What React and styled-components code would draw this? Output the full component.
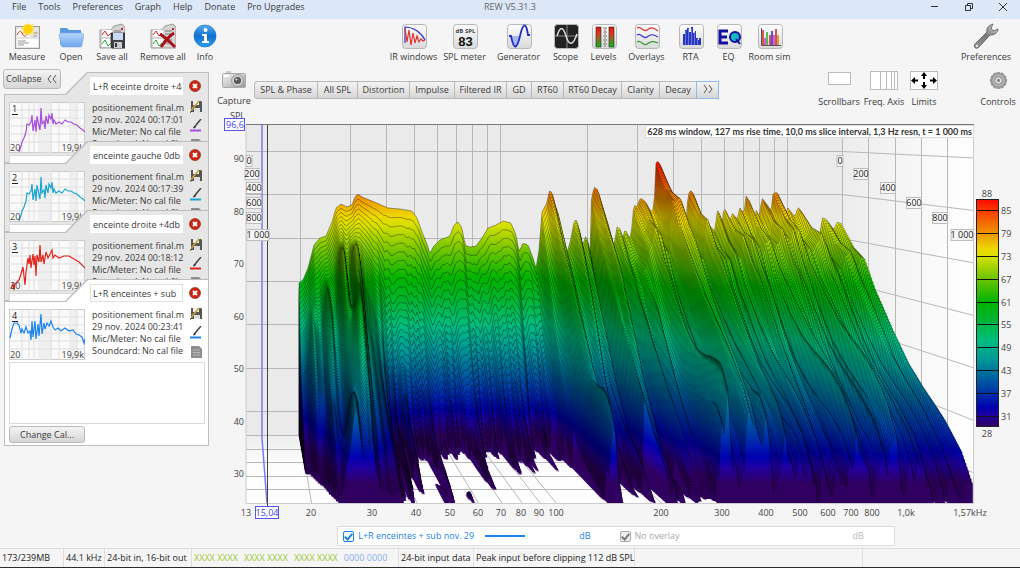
import React from 'react';
import styled, { createGlobalStyle, css } from 'styled-components';

const GlobalStyle = createGlobalStyle`
  * {
    box-sizing: border-box;
  }
  body {
    margin: 0;
    background: #f5f5f5;
    color: #3a3a3a;
    font: 9px/12px "Open Sans", "Noto Sans", sans-serif;
  }
  button, input, textarea {
    font: inherit;
    color: inherit;
    margin: 0;
  }
`;

const Window = styled.div`
  display: flex;
  flex-direction: column;
  min-height: 100vh;
  border-bottom: 1px solid #2c2c2c;
`;

const TitleBar = styled.header`
  display: grid;
  grid-template-columns: 1fr auto 1fr;
  align-items: center;
  height: 19px;
  padding-bottom: 5px;
  background: #dce8f7;
`;

const Menu = styled.nav`
  display: flex;
  padding-left: 12px;
  gap: 12px;
`;

const MenuButton = styled.button`
  border: 0;
  padding: 0;
  background: none;
  line-height: 12px;
`;

const AppTitle = styled.h1`
  margin: 0;
  font-size: 9px;
  font-weight: 400;
  color: #666;
`;

const WindowButtons = styled.div`
  display: flex;
  justify-content: flex-end;
  gap: 22px;
  padding-right: 11px;
`;

const WindowButton = styled(MenuButton)`
  width: 12px;
  height: 12px;
  svg {
    display: block;
  }
`;

const Toolbar = styled.div`
  display: flex;
  justify-content: space-between;
  height: 47px;
  padding: 4px 5px 0 4px;
`;

const ToolGroup = styled.div`
  display: flex;
  padding-left: ${p => p.$before || 0}px;
  padding-right: ${p => p.$after || 0}px;
`;

const ToolButton = styled.button`
  display: flex;
  flex-direction: column;
  align-items: center;
  gap: ${p => p.$gap || 2}px;
  width: ${p => p.$width}px;
  padding: 0;
  border: 0;
  background: none;
  line-height: 12px;
  white-space: nowrap;
  svg {
    flex: none;
  }
`;

const Body = styled.div`
  display: flex;
  flex: 1;
`;

const Sidebar = styled.aside`
  flex: none;
  width: 212px;
  padding: 3px 3px 0 3px;
`;

const buttonLook = css`
  border: 1px solid #b9b9b9;
  background: linear-gradient(#f4f4f4, #d6d6d6);
`;

const CollapseButton = styled.button`
  ${buttonLook}
  display: flex;
  align-items: center;
  gap: 6px;
  width: 58px;
  height: 20px;
  padding: 0 2px;
  border-radius: 3px;
`;

const CardList = styled.div`
  margin: -17px 0 0 1px;
`;

const tabShape = 'polygon(0 22px, 61px 22px, 83px 0, 100% 0, 100% 100%, 0 100%)';

// every card but the open one is covered from below by the next card
const Card = styled.section`
  position: relative;
  width: 205px;
  height: ${p => (p.$open ? 'auto' : '91px')};
  margin-bottom: ${p => (p.$open ? 0 : -22)}px;
  padding: 5px 4px 3px 5px;
  overflow: hidden;
  background: #bdbdbd;
  clip-path: ${tabShape};
  &::before {
    content: '';
    position: absolute;
    inset: 1px;
    background: ${p => (p.$open ? '#fff' : '#e6e6e6')};
    clip-path: ${tabShape};
  }
  > * {
    position: relative;
  }
`;

const CardTop = styled.div`
  display: flex;
  align-items: center;
  gap: 6px;
  height: 18px;
  margin-left: 81px;
`;

const NameInput = styled.input`
  width: 93px;
  height: 18px;
  padding: 0 0 0 2px;
  border: 1px solid ${p => (p.$open ? '#e0e0e0' : '#fff')};
  background: #fff;
`;

const IconButton = styled.button`
  display: block;
  padding: 0;
  border: 0;
  background: none;
  svg {
    display: block;
  }
`;

const CardMain = styled.div`
  display: grid;
  grid-template-columns: 76px 1fr 13px;
  column-gap: 7px;
  margin-top: 7px;
`;

const Info = styled.div`
  overflow: hidden;
  white-space: nowrap;
  height: 51px;
`;

const CardIcons = styled.div`
  display: flex;
  flex-direction: column;
  gap: 6px;
  margin: -2px 0 0 -2px;
`;

const Notes = styled.textarea`
  display: block;
  width: 196px;
  height: 62px;
  margin-top: 2px;
  border: 1px solid #dadada;
  background: #fff;
  resize: none;
`;

const CalButton = styled.button`
  ${buttonLook}
  width: 76px;
  height: 17px;
  margin-top: 2px;
  padding: 0;
  border-radius: 3px;
`;

const Main = styled.main`
  flex: 1;
  min-width: 0;
`;

const GraphBar = styled.div`
  display: flex;
  height: 42px;
  padding: 5px 0 0 6px;
`;

const Tabs = styled.div`
  display: flex;
  height: 18px;
  margin: 10px auto 0 5px;
`;

const Tab = styled.button`
  ${buttonLook}
  width: ${p => p.$width}px;
  padding: 0;
  margin-left: -1px;
  white-space: nowrap;
  &:first-child {
    border-radius: 3px 0 0 3px;
  }
  ${p => p.$active && css`
    border-color: #8fb8ee;
  `}
`;

const Graph = styled.svg`
  display: block;
  width: 100%;
  height: auto;
`;

const Legend = styled.div`
  display: flex;
  align-items: center;
  width: 69%;
  height: 20px;
  margin: 4px auto 2px;
  padding: 0 30px 0 5px;
  border: 1px solid #dcdcdc;
  background: #fff;
`;

const Trace = styled.label`
  display: flex;
  align-items: center;
  gap: 4px;
  width: ${p => p.$width}px;
  color: ${p => p.$color};
`;

const Check = styled.input`
  appearance: none;
  width: 11px;
  height: 11px;
  border: 1px solid currentColor;
  border-radius: 2px;
  color: inherit;
  background: ${p => (p.disabled ? '#eee' : '#fff')};
  &::after {
    content: '';
    display: block;
    width: 3px;
    height: 6px;
    margin: 0 auto;
    border: solid ${p => (p.disabled ? '#777' : 'currentColor')};
    border-width: 0 2px 2px 0;
    transform: rotate(40deg);
  }
`;

const TraceLine = styled.div`
  width: 40px;
  height: 2px;
  background: #1c83e8;
`;

const Unit = styled.span`
  margin-left: ${p => p.$left};
  margin-right: ${p => p.$right || 0};
  color: ${p => p.$color};
`;

const StatusBar = styled.footer`
  display: flex;
  height: 19px;
  border-top: 1px solid #dedede;
  color: #222;
`;

const StatusCell = styled.div`
  width: ${p => p.$width}px;
  padding: 3px 0 0 2px;
  border-right: 1px solid #dedede;
  white-space: nowrap;
`;

const Bits = styled.span`
  margin-right: 6px;
  color: ${p => (p.$zero ? '#8aaef0' : '#9cc83a')};
`;

/* ---------- icons ---------- */

const Svg = ({ size = 26, children }) => (
  <svg width={size} height={size} viewBox={`0 0 ${size} ${size}`} fill="none">{children}</svg>
);

const Tile = ({ dark, children }) => (
  <Svg>
    <rect x="1.5" y="1.5" width="24" height="24" rx="3" fill={dark ? '#222' : 'url(#tile)'} stroke="#b8b8b8" />
    {children}
  </Svg>
);

const SheetArt = () => (
  <g>
    <path d="M1 7H12L15 3L23 1L26 4V25H1Z" fill="#d4d4d4" stroke="#999" />
    <rect x="3" y="7" width="10" height="7" fill="#fff" />
    <rect x="3" y="16" width="10" height="8" fill="#fff" />
    <path d="M3 12L6 8L9 13L12 10" stroke="#d22" />
    <path d="M3 21L6 17L9 23L12 20" stroke="#2a3" />
    <path d="M15 8H22M15 11H21M15 17H22M15 20H21" stroke="#777" />
    <path d="M22 5L24 7M24 5L22 7" stroke="#c22" />
  </g>
);

const MeasureIcon = () => (
  <Svg>
    <rect x="1.5" y="3.500" width="24" height="22" fill="#e4e4e4" stroke="#999" />
    <rect x="3" y="6" width="13" height="8" fill="#fff" />
    <rect x="3" y="16" width="21" height="8" fill="#fff" />
    <path d="M3 12C5 9 6 6 8 10S11 15 14 9" stroke="#d22" />
    <path d="M4 18H12M4 20H15M4 22H10M19 10H24M19 13H23" stroke="#999" />
    <path d="M14 0L16 2L19 1L19 4L21 6L19 8L20 11L17 11L14 13L12 11L9 11L9 8L7 6L9 4L10 1L12 2Z" fill="#ffe45a" />
    <circle cx="14" cy="6" r="4.500" fill="#ffd000" />
  </Svg>
);

const OpenIcon = () => (
  <Svg>
    <path d="M2 22V6Q2 5 3 5H9L11 7H23V12L2 22Z" fill="#5b98e0" />
    <path d="M1 12Q1 10 3 10H23Q26 10 26 12L24 22Q24 24 22 24H5Q3 24 3 22Z" fill="url(#folder)" stroke="#7cabe8" strokeWidth=".6" />
  </Svg>
);

const SaveAllIcon = () => (
  <Svg>
    <SheetArt />
    <path d="M12 10H26V25H13L12 24Z" fill="#3b3f46" stroke="#222" strokeWidth=".7" />
    <rect x="14" y="10" width="10" height="7" fill="#c9daf2" />
    <rect x="15" y="19" width="8" height="6" fill="#ccc" />
    <rect x="16" y="20" width="2" height="4" fill="#333" />
  </Svg>
);

const RemoveAllIcon = () => (
  <Svg>
    <SheetArt />
    <path d="M10 11C15 14 20 19 25 24M24 10C19 13 15 18 11 24" stroke="#a80f18" strokeWidth="3" />
  </Svg>
);

const InfoIcon = () => (
  <Svg>
    <circle cx="13" cy="13" r="11" fill="url(#info)" stroke="#0b62b8" strokeWidth=".6" />
    <circle cx="13.500" cy="7" r="2" fill="#fff" />
    <path d="M10 11H15V18H17V20H10V18H12V13H10Z" fill="#fff" />
  </Svg>
);

const IrIcon = () => (
  <Tile>
    <path d="M4 20V4C12 4 20 9 24 17" stroke="#3434cc" strokeWidth="1.200" />
    <path d="M4 5L6 19L8 7L10 22L12 10L14 20L16 13L18 19L20 16L22 18L24 17" stroke="#d33" strokeWidth="1.200" />
  </Tile>
);

const SplIcon = () => (
  <Tile>
    <text x="13.500" y="10" fontSize="6" fontWeight="700" textAnchor="middle" fill="#444">dB SPL</text>
    <text x="13.500" y="23" fontSize="13" fontWeight="700" fontFamily="Liberation Sans" textAnchor="middle" fill="#111">83</text>
  </Tile>
);

const GeneratorIcon = () => (
  <Tile>
    <path d="M4 13C7 24 11 28 14 13Z" fill="#a9b8ec" />
    <path d="M3 13H5C8 28 11 26 14 13S20 -2 22 12H24" stroke="#1f2fc4" strokeWidth="1.800" />
  </Tile>
);

const ScopeIcon = () => (
  <Tile dark>
    <path d="M14 2V25M2 13H25" stroke="#888" />
    <path d="M4 13C7 3 10 3 13 13S20 23 24 11" stroke="#ddd" strokeWidth="1.500" />
  </Tile>
);

const LevelsIcon = () => (
  <Tile>
    <rect x="5" y="4" width="5" height="20" fill="url(#level)" stroke="#222" strokeWidth=".6" />
    <rect x="18" y="4" width="5" height="20" fill="url(#level)" stroke="#222" strokeWidth=".6" />
    {[5, 9, 13, 17, 21].map(y => (
      <path key={y} d={`M12 ${y}H16M13 ${y + 2}H15`} stroke="#777" />
    ))}
  </Tile>
);

const OverlaysIcon = () => (
  <Tile>
    {['#d33', '#33c', '#393'].map((c, i) => (
      <path key={c} d={`M3 ${5 + i * 7}C7 ${2 + i * 7} 9 ${10 + i * 7} 13 ${7 + i * 7}S19 ${4 + i * 7} 24 ${8 + i * 6}`} stroke={c} strokeWidth="1.200" />
    ))}
  </Tile>
);

const RtaIcon = () => (
  <Tile>
    <path d="M5 22V11H7V7H9V5H11V9H13V4H15V10H17V8H18V15H20V17H21V15H23V22Z" fill="#2636c0" />
    <path d="M7.500 22V8M10.500 22V6M13.500 22V6M16.500 22V9M19.500 22V16" stroke="#8d97e0" strokeWidth=".7" />
  </Tile>
);

const EqIcon = () => (
  <Tile>
    <path d="M12 8H4V20H12M4 14H11" stroke="#10109c" strokeWidth="3" />
    <circle cx="19" cy="14" r="5" fill="#12b9c0" stroke="#10109c" strokeWidth="2" />
    <path d="M20 16L24 21" stroke="#10109c" strokeWidth="2" />
  </Tile>
);

const RoomIcon = () => (
  <Tile>
    {[['#c22', 6, 7], ['#d3d', 8, 15], ['#2a2', 10, 9], ['#c22', 13, 12], ['#22c', 15, 8], ['#d3d', 17, 12], ['#c22', 19, 6], ['#c80', 21, 12]].map(([c, x, y]) => (
      <path key={x} d={`M${x} ${y}V22`} stroke={c} strokeWidth="1.500" />
    ))}
    <path d="M4.500 5V22.500H24" stroke="#555" />
  </Tile>
);

const WrenchIcon = () => (
  <Svg>
    <path d="M2 21L14 9C13 5 16 2 20 1L18 5L20 8L25 6C25 10 21 12 17 12L6 24C3 27 0 24 2 21Z" fill="url(#wrench)" stroke="#555" strokeWidth=".8" />
    <circle cx="4" cy="23" r="1" fill="#fff" />
  </Svg>
);

const CameraIcon = () => (
  <svg width="24" height="18" viewBox="0 0 24 18">
    <rect x=".5" y="2.500" width="23" height="14" rx="1" fill="url(#steel)" stroke="#aaa" />
    <rect x="4" y="0" width="5" height="2" fill="#ccc" />
    <rect x="2" y="4" width="5" height="2" fill="#fff" />
    <circle cx="15.500" cy="9.500" r="6" fill="#ccc" stroke="#888" strokeWidth=".7" />
    <circle cx="15.500" cy="9.500" r="3.500" fill="#555" />
    <circle cx="14.500" cy="8.500" r="1" fill="#eee" />
  </svg>
);

const ScrollbarsIcon = () => (
  <svg width="26" height="19" viewBox="0 0 26 19"><rect x="2.500" y="1.500" width="22" height="12" fill="#fff" stroke="#bbb" /></svg>
);

const FreqIcon = () => (
  <svg width="28" height="19" viewBox="0 0 28 19">
    <rect x=".5" y=".5" width="27" height="18" fill="#fff" stroke="#bbb" />
    <path d="M10.500 0V19M16.500 0V19M21.500 0V19M24.500 0V19" stroke="#bbb" />
  </svg>
);

const LimitsIcon = () => (
  <svg width="28" height="19" viewBox="0 0 28 19">
    <rect x=".5" y=".5" width="27" height="18" fill="#fff" stroke="#bbb" />
    <path d="M14 1L17 5H15V8H13V5H11ZM14 18L17 14H15V11H13V14H11ZM1 9.500L5 6V8.500H8V10.500H5V13ZM27 9.500L23 6V8.500H20V10.500H23V13Z" fill="#000" />
  </svg>
);

const GearIcon = () => (
  <svg width="19" height="19" viewBox="-10 -10 20 20">
    {[0, 30, 60, 90, 120, 150].map(a => (
      <rect key={a} x="-2" y="-9" width="4" height="18" rx="1" fill="#999" transform={`rotate(${a})`} />
    ))}
    <circle r="7" fill="#b4b4b4" stroke="#888" strokeWidth=".7" />
    <circle r="4" fill="#ddd" stroke="#888" />
    <circle r="1.500" fill="#777" />
  </svg>
);

const CloseIcon = () => (
  <svg width="12" height="12" viewBox="0 0 12 12">
    <circle cx="6" cy="6" r="5.500" fill="#cf2312" stroke="#8e3a2a" strokeWidth=".8" />
    <path d="M4 4L8 8M8 4L4 8" stroke="#fff" strokeWidth="2" />
  </svg>
);

const EditIcon = () => (
  <svg width="13" height="13" viewBox="0 0 13 13">
    <path d="M1 1H11L12 2V12H1Z" fill="#555" />
    <rect x="3" y="1" width="6" height="4" fill="#eee" />
    <rect x="4" y="8" width="6" height="4" fill="#ddd" />
    <path d="M1 11L3 8L9 1" stroke="#c9a63a" strokeWidth="1.500" fill="none" />
    <path d="M0 12.500L2 11" stroke="#222" />
  </svg>
);

const PenIcon = ({ color }) => (
  <svg width="13" height="13" viewBox="0 0 13 13">
    <path d="M4 9L6 6L11 0" stroke="#444" strokeWidth="1.500" fill="none" />
    <path d="M3 9.500L4 7L6 8Z" fill="#333" />
    <path d="M0 11.500H11" stroke={color} strokeWidth="2" />
  </svg>
);

const DocIcon = () => (
  <svg width="13" height="13" viewBox="0 0 13 13">
    <path d="M1 1H9L12 4V13H1Z" fill="#8d8d8d" />
    <path d="M3 5H10M3 7.500H10M3 10H10" stroke="#b8b8b8" />
  </svg>
);

const Defs = () => (
  <svg width="0" height="0" style={{ position: 'absolute' }} aria-hidden="true">
    <defs>
      <linearGradient id="tile" x1="0" y1="0" x2="0" y2="1"><stop stopColor="#fdfdfd" /><stop offset="1" stopColor="#d9d9d9" /></linearGradient>
      <linearGradient id="folder" x1="0" y1="0" x2="0" y2="1"><stop stopColor="#b6d6fb" /><stop offset="1" stopColor="#6ca4ea" /></linearGradient>
      <linearGradient id="info" x1="0" y1="0" x2="0" y2="1"><stop stopColor="#55acf2" /><stop offset=".5" stopColor="#0f70d0" /><stop offset="1" stopColor="#2aa0f4" /></linearGradient>
      <linearGradient id="level" x1="0" y1="0" x2="0" y2="1"><stop stopColor="#e11" /><stop offset=".4" stopColor="#c42" /><stop offset="1" stopColor="#0b2" /></linearGradient>
      <linearGradient id="steel" x1="0" y1="0" x2="1" y2="1"><stop stopColor="#eee" /><stop offset=".5" stopColor="#ccc" /><stop offset="1" stopColor="#999" /></linearGradient>
      <linearGradient id="wrench" x1="1" y1="0" x2="0" y2="1"><stop stopColor="#ddd" /><stop offset=".5" stopColor="#777" /><stop offset="1" stopColor="#999" /></linearGradient>
    </defs>
  </svg>
);

/* ---------- thumbnails ---------- */

const thumbCurves = {
  full: '10,50 12,44 13,40 15,36 17,30 18,22 20,23 22,20 23,13 24,29 26,18 27,30 28,14 30,24 31,28 32,6 33,22 35,19 36,27 37,14 39,22 40,13 42,17 43,11 44,22 45,18 47,22 50,20 53,22 56,18 59,20 62,20 65,22 68,23 71,26 74,28 76,30',
  dip: '2,48 4,44 5,50 6,44 8,42 10,40 12,34 14,27 16,45 17,32 19,18 20,24 21,15 22,28 24,14 25,25 26,16 27,36 28,15 30,22 31,5 32,22 34,15 35,24 37,12 39,18 41,14 43,10 44,18 46,15 50,18 55,16 60,16 65,19 70,22 76,28',
  sub: '1,29 3,20 5,14 8,14 10,16 12,24 13,20 15,24 17,18 19,24 21,22 22,31 23,12 24,28 26,12 27,30 29,15 30,27 32,5 33,25 35,14 36,20 38,14 40,17 42,12 44,18 46,21 49,19 52,22 56,19 60,22 64,21 67,25 70,26 73,28 75,34 76,30',
};

const Thumb = ({ number, curve, color }) => (
  <svg width="76" height="51" viewBox="0 0 76 51">
    <rect x=".5" y=".5" width="75" height="50" fill="#fafafa" stroke="#ccc" />
    <path d="M13 0V51M20 0V51M25 0V51M42 0V51M50 0V51M68 0V51M0 8H76M0 16H76M0 24H76M0 32H76M0 40H76" stroke="#dedede" />
    <rect x="29" y="0" width="14" height="51" fill="#e4e4e4" opacity=".5" />
    <rect x="60" y="0" width="8" height="51" fill="#e4e4e4" opacity=".5" />
    <polyline points={thumbCurves[curve]} fill="none" stroke={color} strokeWidth="1.200" />
    <text x="3" y="10" fontSize="9" fill="#222">{number}</text>
    <path d="M3 12.500H9" stroke="#222" />
    <text x="1" y="49" fontSize="9" fill="#444">20</text>
    <text x="75" y="49" fontSize="9" fill="#444" textAnchor="end">19,9k</text>
  </svg>
);

/* ---------- waterfall ---------- */

const LEFT = 246;
const rearX = s => LEFT + 287 * s;

// level ridge of the first slice, in rear plane coordinates
const ridge = [
  [299, 283], [303, 280], [308, 268], [314, 245], [320, 238], [326, 236], [332, 222], [336, 208], [341, 204], [347, 207],
  [352, 205], [355, 197], [358, 194], [362, 197], [372, 201], [388, 208], [400, 209], [412, 211], [417, 218], [422, 232],
  [427, 244], [430, 254], [433, 247], [440, 240], [450, 236], [454, 225], [458, 222], [462, 228], [465, 245], [470, 247],
  [476, 246], [482, 238], [488, 228], [496, 225], [503, 221], [511, 223], [516, 235], [519, 252], [523, 243], [528, 245],
  [533, 258], [536, 268], [539, 250], [542, 212], [547, 203], [549, 191], [552, 192], [555, 205], [558, 212], [562, 240],
  [565, 258], [570, 243], [574, 222], [576, 219], [580, 232], [583, 247], [585, 236], [588, 240], [590, 254], [591, 202],
  [594, 187], [598, 190], [603, 212], [609, 240], [612, 252], [615, 240], [617, 227], [620, 229], [623, 238], [625, 229],
  [629, 237], [631, 236], [634, 204], [637, 208], [640, 198], [645, 201], [651, 212], [654, 208], [656, 163], [658, 161],
  [661, 166], [667, 184], [674, 206], [680, 224], [683, 218], [686, 222], [688, 195], [691, 190], [694, 195], [699, 214],
  [703, 232], [706, 222], [711, 227], [715, 232], [717, 210], [720, 214], [722, 224], [724, 207], [730, 222], [732, 213],
  [737, 219], [740, 208], [744, 214], [746, 196], [750, 202], [754, 218], [756, 209], [759, 218], [762, 198], [768, 206],
  [771, 212], [773, 194], [777, 192], [782, 204], [784, 216], [788, 208], [795, 217], [798, 207], [803, 214], [808, 228],
  [813, 238], [817, 230], [820, 236], [822, 218], [826, 219], [834, 230], [837, 222], [842, 224],
];

const lerpTable = (table, x) => {
  if (x <= table[0][0]) return table[0][1];
  for (let i = 1; i < table.length; i++) {
    if (x <= table[i][0]) {
      const [x0, y0] = table[i - 1];
      const [x1, y1] = table[i];
      return y0 + ((y1 - y0) * (x - x0)) / (x1 - x0);
    }
  }
  return table[table.length - 1][1];
};

const bass = [[0, 0], [0.1, 11], [0.2, 19], [0.35, 27], [0.5, 33], [0.7, 40], [0.85, 45], [1, 52]];
const dead = [[0, 0], [0.1, 20], [0.2, 36], [0.28, 44], [0.4, 50], [0.6, 53], [1, 56]];
const mid = [[0, 0], [0.1, 7], [0.25, 18], [0.4, 29], [0.6, 40], [0.8, 47], [1, 53]];
const treble = [[0, 0], [0.1, 5], [0.18, 7], [0.26, 13], [0.4, 21], [0.52, 27], [0.63, 31], [0.79, 36], [0.92, 41], [1, 46]];

const decayZones = [
  [299, bass], [362, bass], [385, dead], [530, dead], [550, mid], [605, mid], [640, treble], [842, treble],
];

const drop = (x, u) => {
  for (let i = 1; i < decayZones.length; i++) {
    const [x1, t1] = decayZones[i];
    if (x <= x1) {
      const [x0, t0] = decayZones[i - 1];
      const k = (x - x0) / (x1 - x0);
      return lerpTable(t0, u) * (1 - k) + lerpTable(t1, u) * k;
    }
  }
  return lerpTable(treble, u);
};

// room modes that ring on: position, width, height, and when they are strongest
const modes = [
  [310, 4, 10, 0.35], [324, 4, 10, 0.3], [338, 4, 11, 0.28], [351, 5, 12, 0.28], [346, 7, 17, 0.6], [334, 9, 17, 1],
  [322, 4, 7, 0.75], [350, 4, 8, 1], [432, 4, 12, 0.95], [548, 3, 10, 0.9],
  [604, 4, 6, 1], [636, 2, 9, 1], [641, 2, 10, 1], [672, 2, 9, 1], [688, 2, 8, 1], [700, 2, 7, 1],
];

const ringing = (x, u) => Math.min(1, u * 5) * modes.reduce((sum, [x0, w, h, t]) => (
  sum + h * Math.exp(-(((x - x0) / w) ** 2)) * Math.exp(-(((u - t) / 0.24) ** 2))
), 0);

const ripple = (x, u) => {
  const a = Math.sin(x * 0.41 + Math.sin(x * 0.13) * 2 + u * 2);
  const b = Math.sin(x * 0.93 + Math.cos(x * 0.21) * 2 - u * 3);
  const c = Math.sin(x * 0.19 + u * 5);
  const size = lerpTable([[299, 1], [370, 1], [390, 3.5], [600, 3.5], [640, 2.4], [800, 2.4], [842, 0.5]], x);
  return size * Math.min(1, u * 3) * (a + b * 0.6 + c * 0.7);
};

const FLOOR = 24.3;
const SLICES = 100;

const planeY = (db, u) => 151 + 7 * u + (90 - db) * (4.33 + 0.92 * u);

const slices = Array.from({ length: SLICES + 1 }, (_, i) => {
  const u = i / SLICES;
  const floorY = planeY(FLOOR, u).toFixed(1);
  const pts = [];
  let line = '';
  let down = true;
  for (let x = 299; x <= 842; x += 1.5) {
    const s = (x - LEFT) / 287;
    const db0 = 90 - (lerpTable(ridge, x) - 151) / 4.33;
    const db = Math.max(FLOOR, db0 - drop(x, u) + ringing(x, u) + ripple(x, u));
    const point = `${(LEFT + (287 + 63 * u) * s).toFixed(1)} ${planeY(db, u).toFixed(1)}`;
    // no outline where the level has sunk into the floor
    if (db > FLOOR) line += (down ? 'M' : 'L') + point;
    down = db <= FLOOR;
    pts.push(point);
  }
  const first = pts[0].split(' ')[0];
  const last = pts[pts.length - 1].split(' ')[0];
  return {
    u,
    line: `M${first} ${floorY}L${pts[0]}${line}`,
    area: `M${first} ${floorY}L${pts.join('L')}L${last} ${floorY}Z`,
  };
});

const palette = [
  [88, '#ff0a00'], [82, '#f56a00'], [79, '#ee9400'], [75, '#eed800'], [73, '#d8e000'], [67, '#6cc400'], [61, '#00b400'],
  [57, '#00b428'], [51, '#00be7c'], [46, '#009c98'], [42, '#006e9c'], [37, '#0034aa'], [33, '#0000b0'], [31, '#2000a0'], [28, '#300060'],
];

const PaletteStops = () => palette.map(([db, c]) => (
  <stop key={db} offset={(88 - db) / 60} stopColor={c} />
));

const freqLines = [20, 30, 40, 50, 60, 70, 80, 90, 100, 200, 300, 400, 500, 600, 700, 800, 900, 1000];
const freqLabels = [
  ['13', 246], ['20', 311], ['30', 372], ['40', 416], ['50', 450], ['60', 478], ['70', 501], ['80', 521], ['90', 539], ['100', 556],
  ['200', 661], ['300', 722], ['400', 766], ['500', 800], ['600', 828], ['700', 851], ['800', 872], ['1,0k', 906], ['1,57kHz', 970],
];
const timeLabels = [
  ['0', 249, 840, 161, 7], ['200', 252, 861, 174, 15], ['400', 254, 888, 188, 16], ['600', 254, 914, 203, 16],
  ['800', 254, 940, 218, 16], ['1 000', 258, 962, 235, 23],
];

const TimeTag = ({ x, y, width, text }) => (
  <g>
    <rect x={x - width / 2 + 0.5} y={y - 5.5} width={width - 1} height="11" fill="#f6f6f6" stroke="#bdbdbd" />
    <text x={x} y={y + 3} textAnchor="middle" fill="#222">{text}</text>
  </g>
);

const Waterfall = () => (
  <Graph viewBox="212 108 808 414" fontSize="9" fill="#444" role="img" aria-label="Waterfall">
    <defs>
      <linearGradient id="wallRight" x1="0" y1="0" x2="1" y2="0"><stop stopColor="#ececec" /><stop offset="1" stopColor="#fff" /></linearGradient>
      <linearGradient id="floor" x1="0" y1="0" x2="0" y2="1"><stop stopColor="#ececec" /><stop offset=".4" stopColor="#fcfcfc" /><stop offset="1" stopColor="#fff" /></linearGradient>
      <linearGradient id="scale" x1="0" y1="0" x2="0" y2="1"><PaletteStops /></linearGradient>
      {slices.map(({ u }, i) => (
        <linearGradient key={i} id={`slice${i}`} gradientUnits="userSpaceOnUse" x1="0" x2="0" y1={planeY(88, u)} y2={planeY(28, u)}>
          <PaletteStops />
        </linearGradient>
      ))}
      <clipPath id="plot"><rect x="246" y="125" width="728" height="378" /></clipPath>
    </defs>

    <text x="230" y="119">SPL</text>
    <g clipPath="url(#plot)">
      <rect x="246" y="125" width="596" height="310" fill="#eaeaea" />
      <path d="M842 125H974V503L842 435Z" fill="url(#wallRight)" />
      <path d="M246 435H842L974 503H246Z" fill="url(#floor)" />
      <g stroke="#b8b8b8" fill="none">
        {freqLines.map(f => {
          const s = Math.log10(f / 13);
          return <path key={f} d={`M${Math.round(rearX(s)) + 0.5} 125V435L${LEFT + 350 * s} 503`} />;
        })}
        {[90, 80, 70, 60, 50, 40, 30].map(db => (
          <path key={db} d={`M246 ${Math.round(planeY(db, 0)) + 0.5}H842L974 ${planeY(db, 1)}`} />
        ))}
        {[0, 1, 2, 3, 4].map(i => (
          <path key={i} d={`M246 ${435.5 + Math.round(i * 13.6)}H${Math.round(842 + i * 26.3) + 0.5}V125`} />
        ))}
      </g>
      {slices.map(({ line, area }, i) => (
        <g key={i}>
          <path d={area} fill={`url(#slice${i})`} />
          <path d={line} fill="none" stroke="#000" strokeOpacity=".45" strokeWidth=".8" />
        </g>
      ))}
      <path d="M262 125V438L267 503" fill="none" stroke="#7a7af5" strokeWidth="1.500" />
    </g>
    <path d="M246 125V503.500H974" fill="none" stroke="#ccc" />
    <path d="M246 124.500H974" stroke="#777" />
    <path d="M973.500 125V503" stroke="#ccc" />
    <path d="M267.500 125V506" stroke="#444" />

    {timeLabels.map(([text, xl, xr, y, width]) => (
      <g key={text}>
        <TimeTag x={xl} y={y} width={width} text={text} />
        <TimeTag x={xr} y={y} width={width} text={text} />
      </g>
    ))}

    <rect x="645.5" y="125.5" width="328" height="12" fill="#fff" stroke="#ddd" />
    <text x="972" y="135" textAnchor="end" fontWeight="700" fontFamily="Lato, sans-serif" fill="#333">628 ms window, 127 ms rise time, 10,0 ms slice interval, 1,3 Hz resn, t = 1 000 ms</text>

    {[90, 80, 70, 60, 50, 40, 30].map(db => (
      <text key={db} x="244" y={planeY(db, 1) + 4} textAnchor="end">{db}</text>
    ))}
    {freqLabels.map(([text, x]) => (
      <text key={text} x={x} y="516" textAnchor="middle">{text}</text>
    ))}
    <g fill="#fff" stroke="#5555f0">
      <rect x="224.5" y="118.500" width="20" height="12" />
      <rect x="255.500" y="506.500" width="23" height="12" />
    </g>
    <g fill="#4040f0" textAnchor="middle">
      <text x="235" y="128">96,6</text>
      <text x="267" y="516">15,04</text>
    </g>

    <rect x="976.5" y="199.500" width="22" height="227" fill="url(#scale)" stroke="#222" />
    {[85, 79, 73, 67, 61, 55, 49, 43, 37, 31].map(db => {
      const y = Math.round(199 + (88 - db) * 3.8);
      return (
        <g key={db}>
          <path d={`M976 ${y + 0.5}H999`} stroke="#111" />
          <text x="1001" y={y + 4}>{db}</text>
        </g>
      );
    })}
    <text x="987" y="197" textAnchor="middle">88</text>
    <text x="987" y="437" textAnchor="middle">28</text>
  </Graph>
);

/* ---------- page ---------- */

const menus = ['File', 'Tools', 'Preferences', 'Graph', 'Help', 'Donate', 'Pro Upgrades'];

const fileTools = [
  ['Measure', MeasureIcon, 46], ['Open', OpenIcon, 42], ['Save all', SaveAllIcon, 40], ['Remove all', RemoveAllIcon, 62], ['Info', InfoIcon, 22],
];
const viewTools = [
  ['IR windows', IrIcon, 52], ['SPL meter', SplIcon, 50], ['Generator', GeneratorIcon, 58], ['Scope', ScopeIcon, 36], ['Levels', LevelsIcon, 40],
  ['Overlays', OverlaysIcon, 46], ['RTA', RtaIcon, 42], ['EQ', EqIcon, 34], ['Room sim', RoomIcon, 48],
];
const graphTools = [
  ['Scrollbars', ScrollbarsIcon, 46], ['Freq. Axis', FreqIcon, 44], ['Limits', LimitsIcon, 36],
];
const tabs = [
  ['SPL & Phase', 64], ['All SPL', 41], ['Distortion', 53], ['Impulse', 46], ['Filtered IR', 53], ['GD', 26], ['RT60', 33],
  ['RT60 Decay', 59], ['Clarity', 39], ['Decay', 38], ['»', 23],
];
const measurements = [
  { name: 'L+R eceinte droite +4db', time: '00:17:01', color: '#a64fe0', curve: 'full' },
  { name: 'enceinte gauche 0db', time: '00:17:39', color: '#1ba6cf', curve: 'full' },
  { name: 'enceinte droite +4db', time: '00:18:12', color: '#e0241b', curve: 'dip' },
  { name: 'L+R enceintes + sub', time: '00:23:41', color: '#1c83f0', curve: 'sub', open: true },
];

const Tool = ({ tool: [label, Icon, width], gap }) => (
  <ToolButton $width={width} $gap={gap}>
    <Icon />
    {label}
  </ToolButton>
);

const MeasurementCard = ({ number, name, time, color, curve, open }) => (
  <Card $open={open}>
    <CardTop>
      <NameInput defaultValue={name} aria-label={`Measurement ${number}`} $open={open} />
      <IconButton aria-label="Remove"><CloseIcon /></IconButton>
    </CardTop>
    <CardMain>
      <Thumb number={number} color={color} curve={curve} />
      <Info>
        <div>positionement final.m</div>
        <div>29 nov. 2024 {time}</div>
        <div>Mic/Meter: No cal file</div>
        <div>Soundcard: No cal file</div>
      </Info>
      <CardIcons>
        <IconButton aria-label="Save"><EditIcon /></IconButton>
        <IconButton aria-label="Trace colour"><PenIcon color={color} /></IconButton>
        <IconButton aria-label="Notes"><DocIcon /></IconButton>
      </CardIcons>
    </CardMain>
    <Notes aria-label="Notes" />
    {open && <CalButton>Change Cal...</CalButton>}
  </Card>
);

const App = () => (
  <Window>
    <GlobalStyle />
    <Defs />
    <TitleBar>
      <Menu>
        {menus.map(m => <MenuButton key={m}>{m}</MenuButton>)}
      </Menu>
      <AppTitle>REW V5.31.3</AppTitle>
      <WindowButtons>
        <WindowButton aria-label="Minimize"><Svg size={12}><path d="M2 5.500H9" stroke="#333" /></Svg></WindowButton>
        <WindowButton aria-label="Restore"><Svg size={12}><path d="M2.500 4.500H7.500V9.500H2.500ZM4.500 4.500V2.500H9.500V7.500H7.500" stroke="#333" /></Svg></WindowButton>
        <WindowButton aria-label="Close"><Svg size={12}><path d="M2 2L10 10M10 2L2 10" stroke="#333" /></Svg></WindowButton>
      </WindowButtons>
    </TitleBar>

    <Toolbar>
      <ToolGroup>
        {fileTools.map(t => <Tool key={t[0]} tool={t} />)}
      </ToolGroup>
      <ToolGroup $before={8}>
        {viewTools.map(t => <Tool key={t[0]} tool={t} />)}
      </ToolGroup>
      <ToolGroup>
        <Tool tool={['Preferences', WrenchIcon, 58]} />
      </ToolGroup>
    </Toolbar>

    <Body>
      <Sidebar>
        <CollapseButton>
          Collapse
          <svg width="10" height="8" viewBox="0 0 10 8" fill="none"><path d="M4 0L1 4L4 8M9 0L6 4L9 8" stroke="#555" /></svg>
        </CollapseButton>
        <CardList>
          {measurements.map((m, i) => <MeasurementCard key={m.time} number={i + 1} {...m} />)}
        </CardList>
      </Sidebar>
      <Main>
        <GraphBar>
          <Tool tool={['Capture', CameraIcon, 32]} gap={6} />
          <Tabs>
            {tabs.map(([label, width]) => (
              <Tab key={label} $width={width} $active={label === '»'}>
                {label === '»' ? (
                  <svg width="10" height="8" viewBox="0 0 10 8" fill="none" aria-label="More"><path d="M1 0L4 4L1 8M6 0L9 4L6 8" stroke="#555" /></svg>
                ) : label}
              </Tab>
            ))}
          </Tabs>
          <ToolGroup $after={34}>
            {graphTools.map(t => <Tool key={t[0]} tool={t} gap={6} />)}
          </ToolGroup>
          <Tool tool={['Controls', GearIcon, 44]} gap={6} />
        </GraphBar>
        <Waterfall />
        <Legend>
          <Trace $color="#1c83e8" $width={142}>
            <Check type="checkbox" defaultChecked />
            L+R enceintes + sub nov. 29
          </Trace>
          <TraceLine />
          <Unit $color="#1c83e8" $left="54px" $right="29px">dB</Unit>
          <Trace $color="#aaa" $width={100}>
            <Check type="checkbox" defaultChecked disabled />
            No overlay
          </Trace>
          <Unit $color="#bbb" $left="auto">dB</Unit>
        </Legend>
      </Main>
    </Body>

    <StatusBar>
      <StatusCell $width={64}>173/239MB</StatusCell>
      <StatusCell $width={41}>44.1 kHz</StatusCell>
      <StatusCell $width={87}>24-bit in, 16-bit out</StatusCell>
      <StatusCell $width={207}>
        <Bits>XXXX XXXX</Bits>
        <Bits>XXXX XXXX</Bits>
        <Bits>XXXX XXXX</Bits>
        <Bits $zero>0000 0000</Bits>
      </StatusCell>
      <StatusCell $width={75}>24-bit input data</StatusCell>
      <StatusCell $width={161}>Peak input before clipping 112 dB SPL</StatusCell>
      <StatusCell $width={228} />
    </StatusBar>
  </Window>
);

export default App;
